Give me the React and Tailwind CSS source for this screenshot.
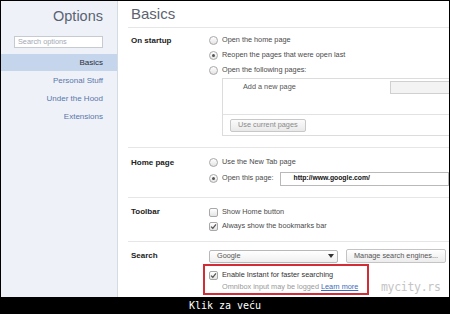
import React from "react";

const F = { fontFamily: '"Liberation Sans", Arial, sans-serif' };

function Radio({ checked }) {
  return (
    <span className="w-[9px] h-[9px] shrink-0 rounded-full border border-[#a8a8a8] bg-linear-to-b from-white to-[#e4e4e4] flex items-center justify-center">
      {checked && <span className="w-[3px] h-[3px] rounded-full bg-[#555]" />}
    </span>
  );
}

function Check({ checked }) {
  return (
    <span className="w-[9px] h-[9px] shrink-0 rounded-[2px] border border-[#a8a8a8] bg-linear-to-b from-white to-[#e4e4e4] flex items-center justify-center">
      {checked && (
        <svg width="7" height="7" viewBox="0 0 7 7">
          <path d="M1 3.6 L2.8 5.3 L6 1.4" fill="none" stroke="#555" strokeWidth="1.3" />
        </svg>
      )}
    </span>
  );
}

function Row({ children, h = "h-[15px]" }) {
  return <div className={`flex items-center gap-[4px] ${h}`}>{children}</div>;
}

function Section({ label, children, className = "" }) {
  return (
    <div className={`flex border-b border-[#e6e6e6] ml-[-3px] pl-[3px] ${className}`}>
      <div className="w-[78px] shrink-0 text-[8px] font-bold text-[#222]">{label}</div>
      <div className="flex-1 min-w-0">{children}</div>
    </div>
  );
}

export default function App() {
  return (
    <div className="w-[450px] h-[314px] bg-black relative overflow-hidden" style={F}>
      <div className="absolute left-[1px] top-[1px] w-[448px] h-[296px] flex bg-white">
        {/* Sidebar */}
        <div className="w-[117px] shrink-0 bg-[#eef2f8] border-r border-[#d6dbe3] flex flex-col">
          <div className="h-[30px] pr-[14px] flex items-center justify-end pt-[1px]">
            <span className="text-[14.5px] text-[#5a6272]">Options</span>
          </div>
          <div className="pl-[13px] pr-[14px] pt-[5px]">
            <div className="h-[12px] border border-[#c6cad1] bg-white flex items-center pl-[3px] text-[7.3px] text-[#a3a9b5]">
              Search options
            </div>
          </div>
          <div className="mt-[6px] h-[17px] bg-[#c5d5ec] flex items-center justify-end pr-[14px] text-[8px] text-[#2a2f38]">
            Basics
          </div>
          <div className="h-[18px] mt-[1px] flex items-center justify-end pr-[14px] text-[8px] text-[#5a76ab]">Personal Stuff</div>
          <div className="h-[18px] flex items-center justify-end pr-[14px] text-[8px] text-[#5a76ab]">Under the Hood</div>
          <div className="h-[18px] flex items-center justify-end pr-[14px] text-[8px] text-[#5a76ab]">Extensions</div>
        </div>

        {/* Main */}
        <div className="flex-1 min-w-0 overflow-hidden pl-[13px] text-[7.3px] text-[#4a4a4a]">
          <div className="h-[27px] border-b border-[#e6e6e6] ml-[-3px] pl-[3px] flex items-center pt-[1px]">
            <span className="text-[15px] text-[#5c6370]">Basics</span>
          </div>

          <Section label={<div className="h-[15px] flex items-center">On startup</div>} className="pt-[5px] pb-[11px]">
            <Row><Radio /><span>Open the home page</span></Row>
            <Row><Radio checked /><span>Reopen the pages that were open last</span></Row>
            <Row><Radio /><span>Open the following pages:</span></Row>
            <div className="ml-[13px] w-[300px] border border-[#dcdcdc]">
              <div className="h-[36px] border-b border-[#e2e2e2] pt-[2px]">
                <div className="flex items-center h-[13px]">
                  <span className="ml-[20px] w-[147px] text-[#555]">Add a new page</span>
                  <span className="w-[80px] h-[13px] border border-[#d0d0d0] bg-[#f3f3f3]" />
                </div>
              </div>
              <div className="h-[20px] flex items-center pl-[7px]">
                <span className="h-[13px] px-[7px] flex items-center rounded-[2px] border border-[#c8c8c8] bg-linear-to-b from-[#fbfbfb] to-[#e9e9e9] text-[#8a8a8a]">
                  Use current pages
                </span>
              </div>
            </div>
          </Section>

          <Section label={<div className="h-[15px] flex items-center">Home page</div>} className="pt-[7px] pb-[10px]">
            <Row><Radio /><span>Use the New Tab page</span></Row>
            <Row h="h-[17px]">
              <Radio checked /><span>Open this page:</span>
              <span className="ml-[2px] flex-1 h-[14px] border border-[#b9b9b9] bg-white flex items-center pl-[13px] text-[#111] font-bold text-[6.8px]">
                http://www.google.com/
              </span>
            </Row>
          </Section>

          <Section label={<div className="h-[14px] flex items-center">Toolbar</div>} className="pt-[7px] pb-[8px]">
            <Row h="h-[14px]"><Check /><span>Show Home button</span></Row>
            <Row h="h-[14px]"><Check checked /><span>Always show the bookmarks bar</span></Row>
          </Section>

          <div className="flex pt-[7px]">
            <div className="w-[78px] shrink-0 text-[8px] font-bold text-[#222] h-[14px] flex items-center">Search</div>
            <div className="flex-1 min-w-0">
              <div className="flex items-center h-[14px]">
                <span className="w-[129px] h-[13px] border border-[#b8b8b8] rounded-[2px] bg-linear-to-b from-white to-[#efefef] flex items-center pl-[7px] pr-[3px] text-[#555]">
                  <span className="flex-1">Google</span>
                  <svg width="6" height="4" viewBox="0 0 6 4"><path d="M0 0 H6 L3 4 Z" fill="#333" /></svg>
                </span>
                <span className="ml-[8px] w-[100px] h-[14px] border border-[#c4c4c4] rounded-[2px] bg-linear-to-b from-white to-[#ececec] flex items-center justify-center text-[#555]">
                  Manage search engines...
                </span>
              </div>
              <div className="ml-[-6px] mt-[1px] w-[166px] h-[31px] border-2 border-[#d22c36] pl-[4px] pt-[3px]">
                <Row h="h-[12px]"><Check checked /><span className="text-[#333]">Enable Instant for faster searching</span></Row>
                <div className="h-[12px] pl-[13px] flex items-center text-[#999]">
                  Omnibox input may be logged&nbsp;<span className="text-[#3b6bbd] underline">Learn more</span>
                </div>
              </div>
            </div>
          </div>
        </div>
      </div>

      <div
        className="absolute left-[381px] top-[279px] text-[11.5px] text-[#c4c4c4] tracking-[-0.3px]"
        style={{ fontFamily: '"DejaVu Sans Mono", monospace' }}
      >
        mycity.rs
      </div>

      <div
        className="absolute left-0 bottom-0 w-full h-[17px] flex items-center justify-center text-white text-[10px]"
        style={{ fontFamily: '"DejaVu Sans Mono", monospace' }}
      >
        Klik za veću
      </div>
    </div>
  );
}
